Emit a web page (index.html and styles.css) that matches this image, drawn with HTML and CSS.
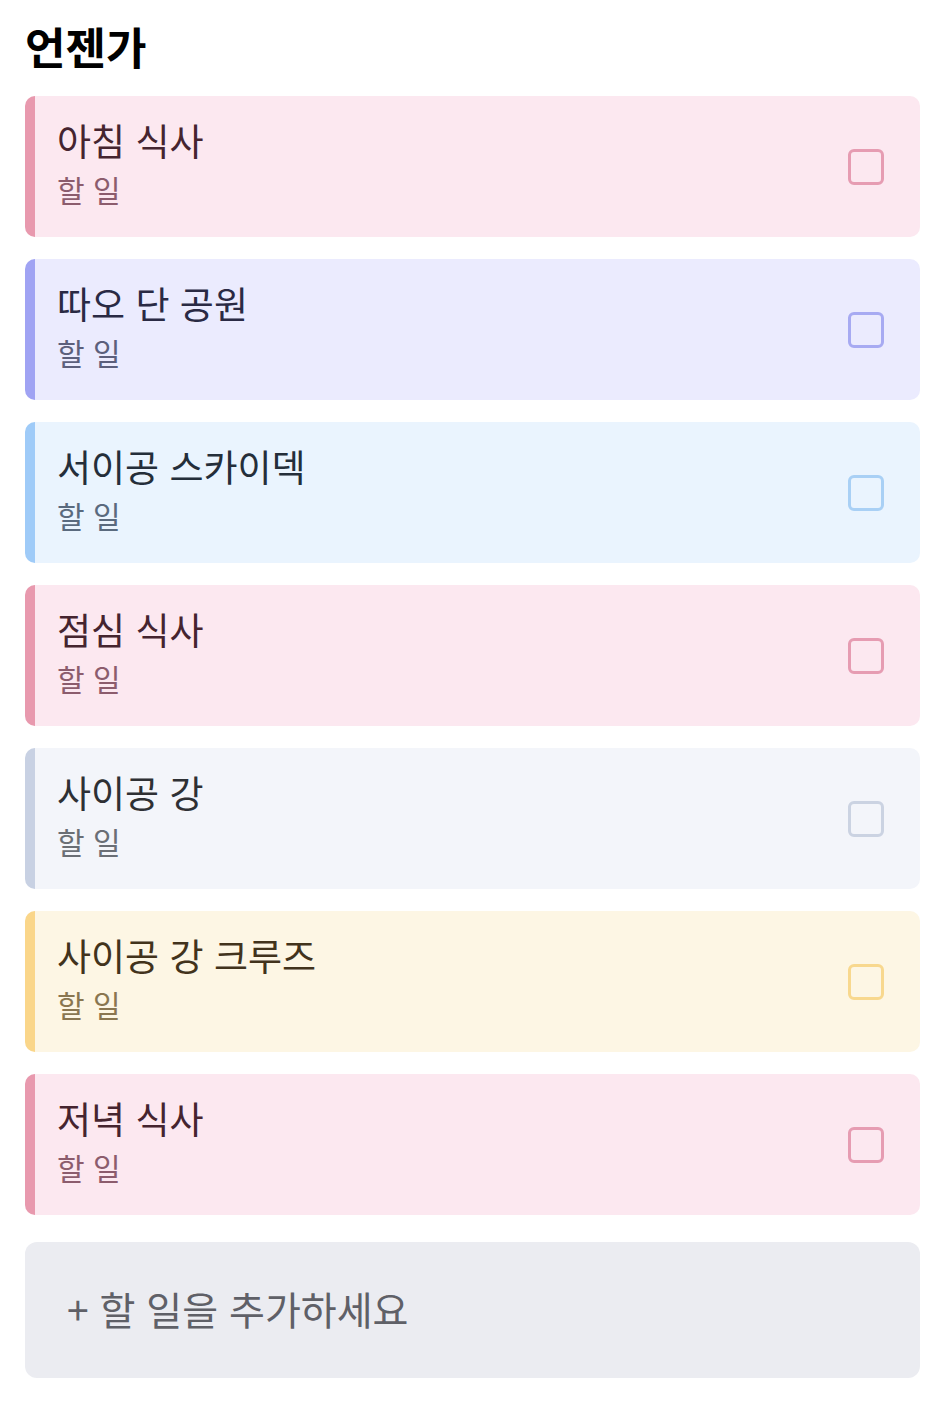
FILE: index.html
```html
<!DOCTYPE html>
<html lang="ko">
<head>
<meta charset="utf-8">
<link rel="stylesheet" href="styles.css">
</head>
<body>
<main class="page">
  <h1 class="heading">언젠가</h1>
  <ul class="list">
    <li class="card pink"><div class="text"><div class="title">아침 식사</div><div class="sub">할 일</div></div><span class="check"></span></li>
    <li class="card lavender"><div class="text"><div class="title">따오 단 공원</div><div class="sub">할 일</div></div><span class="check"></span></li>
    <li class="card blue"><div class="text"><div class="title">서이공 스카이덱</div><div class="sub">할 일</div></div><span class="check"></span></li>
    <li class="card pink"><div class="text"><div class="title">점심 식사</div><div class="sub">할 일</div></div><span class="check"></span></li>
    <li class="card grey"><div class="text"><div class="title">사이공 강</div><div class="sub">할 일</div></div><span class="check"></span></li>
    <li class="card yellow"><div class="text"><div class="title">사이공 강 크루즈</div><div class="sub">할 일</div></div><span class="check"></span></li>
    <li class="card pink"><div class="text"><div class="title">저녁 식사</div><div class="sub">할 일</div></div><span class="check"></span></li>
  </ul>
  <div class="add">+ 할 일을 추가하세요</div>
</main>
</body>
</html>
```
FILE: styles.css
```css
html, body {
  margin: 0;
  padding: 0;
  background: #ffffff;
}
body {
  font-family: "Noto Sans CJK KR", "Noto Sans", sans-serif;
}
.page {
  padding: 16px 30px 0 25px;
}
.heading {
  margin: 0 0 20px 0;
  font-size: 44px;
  font-weight: 700;
  line-height: 60px;
  color: #000000;
}
.list {
  list-style: none;
  margin: 0;
  padding: 0;
  display: flex;
  flex-direction: column;
  gap: 22px;
}
.card {
  display: flex;
  align-items: flex-start;
  justify-content: space-between;
  height: 141px;
  box-sizing: border-box;
  border-radius: 10px;
  border-left: 10px solid;
  padding: 20px 36px 0 22px;
}
.text {
  display: flex;
  flex-direction: column;
}
.title {
  font-size: 37px;
  font-weight: 400;
  line-height: 48px;
}
.sub {
  margin-top: 2px;
  font-size: 30px;
  font-weight: 400;
  line-height: 46px;
}
.check {
  align-self: center;
  margin-top: -20px;
  width: 36px;
  height: 36px;
  box-sizing: border-box;
  border: 3px solid;
  border-radius: 6px;
}
.pink { background: #fce8f0; border-left-color: #e899ae; }
.pink .title { color: #45242f; }
.pink .sub { color: #8c5c6d; }
.pink .check { border-color: #e69cb2; }

.lavender { background: #ebebfe; border-left-color: #a0a3f3; }
.lavender .title { color: #2a2a44; }
.lavender .sub { color: #5c5f7c; }
.lavender .check { border-color: #a7aaf2; }

.blue { background: #eaf4fe; border-left-color: #9fcbf8; }
.blue .title { color: #242e3a; }
.blue .sub { color: #5a6a7e; }
.blue .check { border-color: #a9d0f5; }

.grey { background: #f3f5fa; border-left-color: #c8d1e3; }
.grey .title { color: #2e3034; }
.grey .sub { color: #6a6e75; }
.grey .check { border-color: #cbd3e2; }

.yellow { background: #fdf6e4; border-left-color: #fad68a; }
.yellow .title { color: #42331c; }
.yellow .sub { color: #8a7650; }
.yellow .check { border-color: #f8d88e; }

.add {
  margin-top: 27px;
  height: 136px;
  box-sizing: border-box;
  background: #ebecf1;
  border-radius: 12px;
  display: flex;
  align-items: center;
  padding: 0 0 5px 42px;
  font-size: 39px;
  color: #5f6067;
}
```
